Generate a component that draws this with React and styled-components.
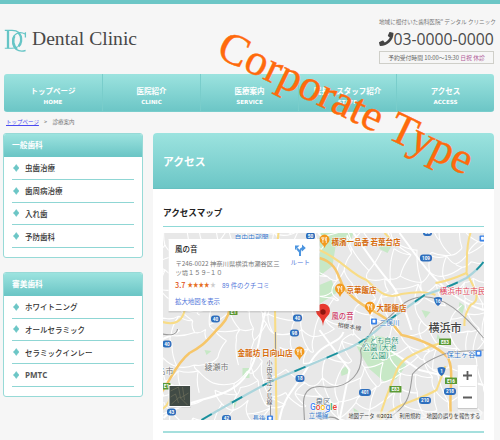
import React from "react";
import styled, { createGlobalStyle } from "styled-components";

const teal = "#6cc6c6";
const grad = "linear-gradient(#9ce3df, #6cc6c6)";
const jp = '"Noto Sans CJK JP", sans-serif';

const Global = createGlobalStyle`
  * { box-sizing: border-box; }
  body { margin: 0; background: #f6f6f6; color: #444; font-family: ${jp}; }
  h1, h2, h3, p, ul { margin: 0; padding: 0; }
`;
const Page = styled.div`
  position: relative; width: 500px; height: 440px; overflow: hidden;
  border-top: 4px solid ${teal}; white-space: nowrap;
`;
const Header = styled.header`
  height: 70px; padding: 14px 6px 0 4px; display: flex; justify-content: space-between;
`;
const Brand = styled.div`
  display: flex; padding-top: 11px; height: 40px;
`;
const BrandName = styled.h1`
  margin-left: 5px; font: 400 19.6px/20px "Liberation Serif", serif; color: #484848;
`;
const Contact = styled.div`
  width: 115px; display: flex; flex-direction: column;
`;
const Tagline = styled.p`
  font-size: 5.65px; line-height: 8px; letter-spacing: -0.05px; color: #777;
`;
const Phone = styled.p`
  display: flex; align-items: center; margin-top: 3px; height: 20px;
  font: 15.75px/20px "Open Sans", sans-serif; color: #4a4a4a;
`;
const Hours = styled.p`
  margin-top: 2px; height: 13px; border: 1px solid #cfcfc9; text-align: center;
  font-size: 5.8px; line-height: 11px; color: #666;
  span { color: #b05a98; }
`;
const Nav = styled.nav`
  display: grid; grid-template-columns: repeat(5, 1fr); margin: 0 6px 0 4px; height: 38px;
  background: ${grad}; border-radius: 3px; overflow: hidden; border-bottom: 1px solid #79cdcc;
`;
const NavItem = styled.a`
  display: flex; flex-direction: column; align-items: center; padding-top: 11px;
  color: #fff; font-weight: 700; font-size: 7.5px; line-height: 12px;
  & + & { border-left: 1px solid #79cdcb; }
  small { font: 700 5.6px/10px "DejaVu Sans", sans-serif; }
`;
const Crumbs = styled.div`
  height: 21px; padding: 5px 6px; font-size: 5.5px; line-height: 10px; color: #777;
  a { color: #4a4af0; text-decoration: underline; padding-right: 4px; }
  span { margin-left: 4px; }
`;
const Columns = styled.div`
  display: grid; grid-template-columns: 139.5px 341px; column-gap: 10.5px; padding-left: 3px;
`;
const Side = styled.aside`
  display: flex; flex-direction: column; gap: 13.8px;
`;
const Panel = styled.section`
  height: 125px; background: #fff; border: 1px solid #97dad7; border-radius: 3px; overflow: hidden;
`;
const PanelTitle = styled.h2`
  height: 23px; padding-left: 8px; background: ${grad}; color: #fff;
  font-size: 7.7px; line-height: 22px; border-bottom: 1px solid ${teal};
`;
const List = styled.ul`
  list-style: none; padding: 0 7.5px;
`;
const Item = styled.li`
  display: flex; align-items: center; gap: 6px; height: 22.75px; padding-left: 1px;
  border-bottom: 1px solid #8fd6d4; font-size: 7.5px; font-weight: 500; color: #333;
`;
const LatinItem = styled.b`
  font: 700 8px "Open Sans", sans-serif; color: #555;
`;
const Main = styled.main`
  height: 307px; background: #fff; border-radius: 4px 4px 0 0; overflow: hidden;
`;
const Hero = styled.h2`
  height: 56px; padding-left: 10px; background: ${grad}; color: #fff;
  font-size: 10.8px; line-height: 56px; border-bottom: 1px solid #67c0c0;
`;
const Body = styled.div`
  padding: 15px 10px 0;
`;
const Heading = styled.h3`
  height: 23px; border-bottom: 1px solid #8fd9d7; color: #222; font-size: 8.6px; line-height: 16px;
`;
const MapBox = styled.div`
  margin-top: 6px; height: 187px; overflow: hidden;
  svg { display: block; }
`;
const EndLine = styled.div`
  margin-top: 11px; height: 2px; background: #a5dfdd;
`;
const Watermark = styled.svg`
  position: absolute; left: 0; top: -4px; pointer-events: none;
`;

const Diamond = () => (
  <svg width="6.5" height="8" viewBox="0 0 6 8"><path d="M3 .5Q4.4 2.6 6 4 4.4 5.4 3 7.5 1.6 5.4 0 4 1.6 2.6 3 .5Z" fill={teal} stroke={teal} strokeWidth=".5" /></svg>
);
const Logo = () => (
  <svg width="23" height="24" viewBox="0 0 23 24" fill="none" stroke="#66c5c6">
    <path d="M.8 1.4H8C13.5 1.4 17 4.5 17 10.2S13.5 19.3 8 19.3H.8" strokeWidth="1.1" />
    <path d="M4 1.4V19.3" strokeWidth="2.3" />
    <path d="M14 3.6Q17.6 6 17.1 12Q16.7 15.5 14.5 17.3" strokeWidth="2.3" />
    <path d="M21.4 8.5V3.2M21.4 5.2C14.5 1.3 8.6 5.5 8.6 12.3c0 7.2 5.4 11.2 13 9.2" strokeWidth="1.3" />
    <path d="M10.4 7C8.3 11 9 16.8 13 20" strokeWidth="2.3" />
  </svg>
);
const Handset = () => (
  <svg width="14.5" height="14" viewBox="0 0 512 512" preserveAspectRatio="none">
    <path fill="#444" d="M493.4 24.6l-104-24c-11.3-2.6-22.9 3.3-27.5 13.9l-48 112c-4.2 9.8-1.4 21.3 6.9 28l60.6 49.6c-36 76.7-98.9 140.5-177.2 177.2l-49.6-60.6c-6.8-8.3-18.2-11.1-28-6.9l-112 48C3.9 366.5-2 378.1.6 389.4l24 104C27.1 504.2 36.7 512 48 512c256.1 0 464-207.5 464-464 0-11.2-7.7-20.9-18.6-23.4z" />
  </svg>
);

/* Side streets: an irregular mesh, the same on every render. */
const jit = (a, b) => {
  const v = Math.sin(a * 127.1 + b * 311.7) * 43758.5453;
  return v - Math.floor(v) - 0.5;
};
const node = (i, j) => [
  155 + i * 14 + j * 3 + jit(i, j) * 17,
  226 + j * 15 - i * 1.5 + Math.sin(i * 0.7) * 6 + jit(j + 40, i) * 17,
];
const streets = (() => {
  let d = "";
  for (let i = -4; i < 27; i++)
    for (let j = -1; j < 18; j++) {
      const [x, y] = node(i, j);
      const [a, b] = node(i + 1, j);
      const [c, e] = node(i, j + 1);
      if (jit(i + 9, j + 5) > -0.2) d += `M${x} ${y}Q${(x + a) / 2} ${(y + b) / 2 + 3} ${a} ${b}`;
      if (jit(i + 3, j + 8) > -0.2) d += `M${x} ${y}Q${(x + c) / 2 - 3} ${(y + e) / 2} ${c} ${e}`;
    }
  return d;
})();

const T = ({ x, y, w, s = 7.5, c = "#555", b = 400, halo = true, children }) => (
  <text x={x} y={y} textLength={w} lengthAdjust="spacingAndGlyphs" fontSize={s} fill={c} fontWeight={b}
    fontFamily='"Noto Sans CJK JP", sans-serif' stroke={halo ? "#fff" : "none"} strokeWidth="1.2" strokeOpacity=".7" paintOrder="stroke">{children}</text>
);
const Food = ({ x, y }) => (
  <g transform={`translate(${x} ${y})`}>
    <path d="M0 8Q-1 5-3 3.5A5 5 0 1 1 3 3.5Q1 5 0 8Z" fill="#f29a1f" />
    <path d="M-1.6-3V0M-2.6-3V-1Q-1.6.6-.6-1V-3M-1.6 0V3M1.8 3V-3Q.7-2 .8.3H1.8" fill="none" stroke="#fff" strokeWidth=".7" />
  </g>
);
const Badge = ({ x, y, t, w = 9, green }) => (
  <g>
    <rect x={x - w / 2} y={y - 3.5} width={w} height={green ? 6.5 : 7} rx={green ? 0.6 : 3} fill={green ? "#5b9a35" : "#2f6fbd"} />
    <text x={x} y={y + 1.7} textAnchor="middle" fontSize="4.7" fontWeight="700" fill="#fff" fontFamily="Roboto, sans-serif">{t}</text>
  </g>
);
const Shield = ({ x, y, t }) => (
  <g>
    <path d={`M${x - 4} ${y - 3}Q${x} ${y - 5} ${x + 4} ${y - 3}Q${x + 4} ${y + 2} ${x} ${y + 5}Q${x - 4} ${y + 2} ${x - 4} ${y - 3}`} fill="#2f6fbd" />
    <text x={x} y={y + 1.7} textAnchor="middle" fontSize="4.7" fontWeight="700" fill="#fff" fontFamily="Roboto, sans-serif">{t}</text>
  </g>
);
const Station = ({ x, y }) => (
  <g><rect x={x - 3} y={y - 3} width="6" height="6" rx="1" fill="#3b83e8" /><rect x={x - 1.4} y={y - 1.8} width="2.8" height="3" rx=".5" fill="#fff" /></g>
);
const yellows = [
  "M231 300Q231 316 222 325C207 340 207 344 190 353C176 364 170 382 163 391",
  "M320 258C344 265 336 285 352 296C368 312 386 312 402 335C420 339 437 346 448 357C456 370 448 398 452 420",
];
const thinYellows = [
  "M320 250C343 260 352 275 367 280C380 292 387 300 402 294Q425 290 436 295",
  "M471 233C466 247 468 260 467 273C475 288 483 300 471 305Q464 316 465 326",
  "M380 418C385 400 391 386 397 371S418 353 432 346L445 342",
  "M163 322Q181 327 185 311M163 409Q172 403 171 390M279 233L275 272L277 420M385 233L390 238M380 420C402 400 417 402 437 390L446 366M467 273Q449 281 436 283",
];
const rail = "M202 420Q231 403 270 382L350 348Q370 338 384 324L425 295Q450 287 467 278Q478 270 484 262";

const AccessMap = () => (
  <svg width="321" height="187" viewBox="163.5 233 321 187">
    <rect x="163" y="233" width="322" height="188" fill="#e8e8e8" />
    <g fill="#c7e8c6">
      <path d="M320 233H354L350 244L336 247L333 266L320 276ZM356 344Q372 330 390 340L397 355L407 365L397 379L385 382L370 369L360 352Z" />
      <path d="M320 285L332 280L337 293L320 304ZM243 368H250V378H243ZM380 240L392 246L388 253L380 249ZM460 302L465 306L463 314L459 310ZM422 310L431 312L426 318ZM438 334L441 338L437 340ZM230 401L238 400L235 408ZM205 350L212 351L207 355ZM341 370L347 366L350 373L342 376ZM400 305L406 308L398 313ZM354 408L360 412L355 418Z" />
    </g>
    <path d={streets} fill="none" stroke="#fff" strokeWidth="1.1" />
    <path d="M163 339Q176 334 180 330M164 418C182 398 220 402 240 383S258 340 266 311M280 420C284 395 297 388 310 364S340 345 344 332M352 230Q379 270 390 282T412 330M484 385L420 370L390 350M484 310Q450 300 420 260L400 233M320 330L350 370L340 420" fill="none" stroke="#fff" strokeWidth="2" />
    {thinYellows.map((d) => <path key={d} d={d} fill="none" stroke="#f8dc86" strokeWidth="2.1" />)}
    {yellows.map((d) => <path key={d} d={d} fill="none" stroke="#f6c66a" strokeWidth="2.5" />)}
    <path d="M305 421L304 402Q305 384 326 387C350 389 365 372 361 350L374 328C396 318 398 300 421 297S468 318 484 338M386 420C413 405 410 390 413 374Q425 360 451 352L484 350M320 420Q335 413 342 423M163 334Q177 337 178 329" fill="none" stroke="#9c9c9c" strokeWidth="1.1" />
    <path d="M276 332V356M271 405V420" stroke="#999" strokeWidth="1" />
    <path d={rail} fill="none" stroke="#abd5dc" strokeWidth="2.3" />
    <path d={rail} fill="none" stroke="#188f9b" strokeWidth="1.8" strokeDasharray="12 23" />

    <T x={235} y={240} w={34} s={7} c="#2f75cb">自由中部間</T>
    <T x={332} y={244.5} w={69} s={7.7} c="#d66b0b" b={700}>横濱一品香 若葉台店</T>
    <T x={347} y={293} w={30} s={7.5} c="#d66b0b" b={700}>京華飯店</T>
    <T x={377} y={311} w={30} s={7.5} c="#d66b0b" b={700}>大龍飯店</T>
    <T x={238} y={356} w={55} s={7.5} c="#d66b0b" b={700}>金龍坊 日向山店</T>
    <T x={440} y={294} w={46} s={8} c="#df4055">横浜市立市民</T>
    <T x={332} y={318.5} w={22} s={7.6} c="#cf3b68" b={500}>風の音</T>
    <T x={380} y={324.5} w={20} s={7} c="#397bc9">二俣川</T>
    <T x={429} y={332} w={33} s={11} c="#444" b={500}>横浜市</T>
    <T x={363} y={342.5} w={36} s={7} c="#34977b">こども自然</T>
    <T x={363} y={350} w={34} s={7} c="#34977b">公園 (大池</T>
    <T x={371} y={357.5} w={18} s={7} c="#34977b">公園)</T>
    <T x={447} y={356.5} w={29} s={7} c="#397bc9">保土ヶ谷</T>
    <T x={205} y={369.5} w={24} s={7.7} c="#777">綾瀬市</T>
    <T x={158} y={374} w={16} s={7.7} c="#777">名市</T>
    <T x={253} y={421} w={13} s={7} c="#397bc9">長後</T>
    <T x={316} y={404} w={15} s={7} c="#607180">泉区</T>
    <T x={309} y={418} w={20} s={7} c="#397bc9">立場線</T>
    <g transform="rotate(9 338 325)"><T x={338} y={327} w={24} s={6} c="#555">相模本線</T></g>
    <g>{[..."小田急江ノ島線"].map((ch, i) => <T key={ch} x={267} y={365 + i * 6.5} w={6} s={6} c="#555">{ch}</T>)}</g>
    <Food x={325} y={240} /><Food x={340.5} y={289} /><Food x={370.5} y={307} /><Food x={300} y={352} />
    <Badge x={216} y={319} t="40" /><Badge x={298} y={318} t="40" /><Badge x={295} y={333} t="98" />
    <Badge x={426.5} y={258} t="109" w={12} /><Shield x={438.5} y={301} t="16" /><Shield x={442} y={371} t="1" />
    <Badge x={167.5} y={344} t="40" /><Badge x={172} y={412} t="43" /><Badge x={227} y={418.5} t="42" />
    <Badge x={300.5} y={378.5} t="18" /><Badge x={365.5} y={392.5} t="401" w={12} />
    <Badge x={450.5} y={391.5} t="218" w={12} /><Badge x={425.5} y={400.5} t="210" w={12} />
    <Badge x={445.5} y={342} t="E83" w={12} green /><Badge x={451.5} y={381} t="E16" w={12} green />
    <Badge x={396} y={389.5} t="E83" w={12} green /><Badge x={167} y={386.5} t="E1" w={8} green />
    <Badge x={234} y={312} t="E1" w={8} green /><Badge x={311} y={236} t="50" /><Badge x={428} y={232.5} t="50" />
    <Station x={374.5} y={321.5} /><Station x={479} y={353.5} /><Station x={270.5} y={418.5} /><Station x={483} y={238.5} />
    <path d="M323.5 326Q323 320 319 316A7 7 0 1 1 328 316Q324 320 323.5 326Z" fill="#e8392f" /><circle cx="323.5" cy="312" r="2.7" fill="#8e150f" />

    <rect x="169" y="240" width="151.5" height="72.5" fill="#777" opacity=".24" />
    <rect x="169" y="239" width="151" height="72" fill="#fff" />
    <T x={175.5} y={251.5} w={22.5} s={7.5} c="#222" b={500} halo={false}>風の音</T>
    <T x={176} y={265.5} w={104} s={6.2} c="#777" halo={false}>〒246-0022 神奈川県横浜市瀬谷区三</T>
    <T x={176} y={275} w={47} s={6.2} c="#777" halo={false}>ツ境１５９−１０</T>
    <T x={175.5} y={287.5} w={10.5} s={7} c="#e05118" b={500} halo={false}>3.7</T>
    <T x={188} y={287.3} w={22} s={6.4} c="#e66b20" halo={false}>★★★★</T><T x={210.8} y={287.3} w={5.5} s={6.4} c="#ccc" halo={false}>★</T>
    <T x={222.5} y={287.5} w={47.5} s={6.5} c="#5276da" halo={false}>89 件のクチコミ</T>
    <T x={175.5} y={303.5} w={45} s={6.3} c="#5276da" halo={false}>拡大地図を表示</T>
    <path d="M300.5 256V252L297.5 248.5M300.5 253Q300.5 248 304 248" fill="none" stroke="#4b94df" strokeWidth="2" />
    <path d="M295.5 245.5H300L295.5 250ZM302.5 244.5L306.3 248L302.5 251.5Z" fill="#4b94df" />
    <T x={291} y={265} w={19.5} s={6.3} c="#5276da" halo={false}>ルート</T>

    <rect x="169.5" y="385.5" width="22" height="22" fill="#aaa" opacity=".5" /><rect x="169" y="385" width="22" height="22" fill="#fff" />
    <rect x="170" y="386" width="20.5" height="20" fill="#414b45" />
    <path d="M171 391L179 387L181 398L189 393M172 404L180 397L188 405M171 397L176 394L179 403M183 387L185 400" fill="none" stroke="#7c7963" strokeWidth=".8" opacity=".65" />
    <rect x="458" y="366" width="20.5" height="43" rx="1" fill="#999" opacity=".4" /><rect x="458" y="365" width="20" height="43" rx="1" fill="#fff" />
    <path d="M460 386.5H476" stroke="#e3e3e3" /><path d="M463.5 375.5H472.5M468 371V380M463.5 397.5H472.5" stroke="#5d5d5d" strokeWidth="1.8" />
    <rect x="347" y="411.5" width="138" height="9" fill="#f5f5f5" opacity=".62" />
    <T x={349} y={417.5} w={26} s={5.5} c="#444" halo={false}>地図データ</T><T x={377} y={417.5} w={16} s={5.5} c="#222" halo={false}>©2021</T>
    <T x={400} y={417.5} w={21} s={5.5} c="#444" halo={false}>利用規約</T><T x={427} y={417.5} w={54} s={5.5} c="#444" halo={false}>地図の誤りを報告する</T>
    <text x="310.5" y="409.5" textLength="27" lengthAdjust="spacingAndGlyphs" fontFamily="Roboto, sans-serif" fontWeight="500" fontSize="8.6" stroke="#fff" strokeWidth="1" paintOrder="stroke">
      <tspan fill="#4285f4">G</tspan><tspan fill="#ea4335">o</tspan><tspan fill="#fbbc05">o</tspan><tspan fill="#4285f4">g</tspan><tspan fill="#34a853">l</tspan><tspan fill="#ea4335">e</tspan>
    </text>
  </svg>
);

const menu = [["トップページ", "HOME"], ["医院紹介", "CLINIC"], ["医療案内", "SERVICE"], ["院長・スタッフ紹介", "STAFF"], ["アクセス", "ACCESS"]];
const panels = [
  ["一般歯科", ["虫歯治療", "歯周病治療", "入れ歯", "予防歯科"]],
  ["審美歯科", ["ホワイトニング", "オールセラミック", "セラミックインレー", "PMTC"]],
];

export default function App() {
  return (
    <Page>
      <Global />
      <Header>
        <Brand><Logo /><BrandName>Dental Clinic</BrandName></Brand>
        <Contact>
          <Tagline>地域に根付いた歯科医院” デンタル クリニック</Tagline>
          <Phone><Handset />03-0000-0000</Phone>
          <Hours>予約受付時間 10:00～19:30 <span>日祝 休診</span></Hours>
        </Contact>
      </Header>
      <Nav>{menu.map(([t, s]) => <NavItem key={s}>{t}<small>{s}</small></NavItem>)}</Nav>
      <Crumbs><a>トップページ</a> &gt; <span>診療案内</span></Crumbs>
      <Columns>
        <Side>
          {panels.map(([title, items]) => (
            <Panel key={title}>
              <PanelTitle>{title}</PanelTitle>
              <List>{items.map((t) => <Item key={t}><Diamond />{t === "PMTC" ? <LatinItem>{t}</LatinItem> : t}</Item>)}</List>
            </Panel>
          ))}
        </Side>
        <Main>
          <Hero>アクセス</Hero>
          <Body>
            <Heading>アクセスマップ</Heading>
            <MapBox><AccessMap /></MapBox>
            <EndLine />
          </Body>
        </Main>
      </Columns>
      <Watermark width="500" height="440">
        <text transform="translate(215 56) rotate(25.5)" fontFamily='"Liberation Serif", serif' fontSize="44" textLength="277" fill="#ff6a0c" stroke="#ff6a0c" strokeWidth=".4">Corporate Type</text>
      </Watermark>
    </Page>
  );
}
